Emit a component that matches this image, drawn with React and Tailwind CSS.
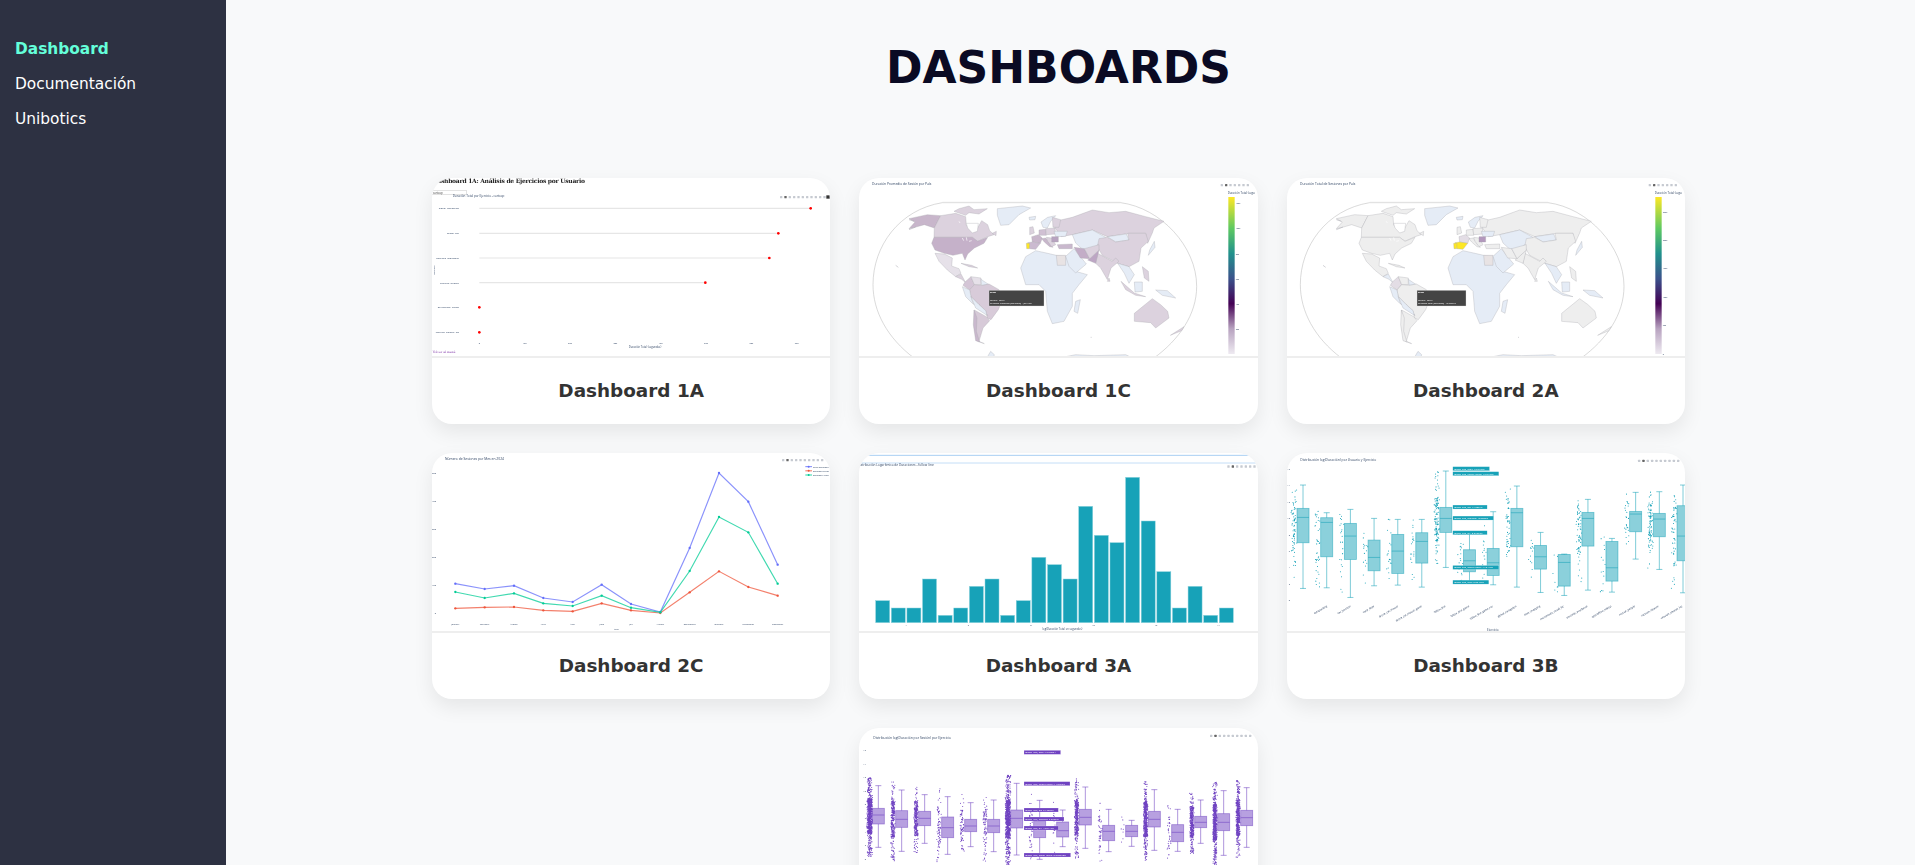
const sans = '"Open Sans", sans-serif'
const ink = '#2a3f5f'

const B = '#e5ecf6'
const L = '#dcd2de'
const G = '#eeeeee'
const Y = '#fde725'

// [points, fill on 1C, fill on 2A]
const countries = [
  ['150,152 168,132 150,122 205,110 245,113 226,150 196,140 168,148', '#c8b6cb', G],
  ['245,113 226,150 225,178 340,178 356,190 386,176 405,170 392,158 386,140 368,128 350,160 322,142 320,116 290,106', L, G],
  ['285,100 300,92 330,84 345,95 385,92 360,108 330,104 320,112', L, G],
  ['400,166 412,160 411,173', L, G],
  ['225,178 340,178 356,190 386,178 375,196 346,210 326,228 318,246 310,226 282,232 256,226 228,216 218,196', '#c5b1c9', G],
  ['228,226 256,228 280,240 278,264 300,272 306,286 290,296 265,276 240,250', '#e6e1e9', G],
  ['290,296 306,288 320,314 308,304', L, B],
  ['306,256 338,262 356,270 330,266', L, G],
  ['415,92 490,84 515,90 480,110 450,140 425,142 415,112', B, B],
  ['318,312 336,296 346,320 332,336 312,322', '#d4c5d6', '#e3dde5'],
  ['336,296 366,300 366,320 346,320', '#e6e1e9', G],
  ['366,304 390,320 368,322', B, B],
  ['332,336 346,320 370,322 390,318 420,335 430,365 418,395 396,425 385,420 380,398 360,380 336,356', '#d8cbd9', G],
  ['310,326 332,336 336,356 342,376 386,412 366,392 340,376 320,356', B, B],
  ['336,356 360,380 380,398 384,412 350,390', B, B],
  ['346,396 382,416 392,428 372,450 360,490 376,497 356,490 346,450', '#d7cad8', G],
  ['345,396 354,420 352,460 362,492 350,488 343,440', '#c9b8cd', G],
  ['485,270 500,236 530,218 566,226 592,232 620,235 650,280 685,290 660,320 640,346 640,385 615,430 580,437 565,400 560,340 540,320 500,320', B, B],
  ['592,232 620,232 620,262 595,262', '#e8e3e4', '#e8e3e4'],
  ['620,235 645,212 682,258 650,285 630,265', B, B],
  ['650,370 664,365 656,406 645,400', B, B],
  ['605,126 640,118 700,96 750,104 800,100 860,116 915,130 885,150 880,165 866,196 860,166 810,166 745,176 700,156 640,170 606,176 586,146', L, G],
  ['640,170 700,156 740,178 705,210 690,232 650,195', B, B],
  ['745,176 802,168 810,186 770,192', B, B],
  ['720,182 745,178 770,192 810,186 806,166 860,166 868,190 846,210 840,250 810,266 776,256 730,232 715,206', L, G],
  ['716,226 760,250 770,240 780,250 756,270 745,305 725,270 710,256', L, G],
  ['645,208 676,212 692,242 664,240', '#c3adc7', G],
  ['692,242 720,216 710,256 686,246', '#bda6c4', G],
  ['676,212 720,200 720,216 692,242', L, G],
  ['595,200 640,198 640,212 600,212', '#c9b8cd', G],
  ['776,256 810,266 826,290 810,316 796,286', B, B],
  ['786,310 826,345 860,356 830,352 800,335', L, B],
  ['826,312 850,312 850,340 828,342', B, B],
  ['850,266 868,280 870,310 856,300', L, G],
  ['890,336 925,338 950,360 910,352', B, B],
  ['872,216 886,190 888,208 868,232', B, B],
  ['826,406 880,362 905,380 926,400 930,420 890,450 875,434 826,430', L, G],
  ['934,472 975,446 968,458', L, G],
  ['745,310 750,300 753,310', L, G],
  ['385,537 395,520 406,530 404,537', B, B],
  ['615,537 650,530 705,533 800,530 815,537', B, B],
  // Europe
  ['510,118 530,115 528,125 512,126', B, B],
  ['546,132 566,118 590,113 575,130 565,150 552,148', B, B],
  ['580,118 605,125 600,148 582,148', L, G],
  ['512,148 522,146 526,165 512,170', L, G],
  ['518,176 538,170 550,180 544,196 520,192', '#c8b6cb', '#e3dde5'],
  ['540,156 560,154 562,172 540,172', '#d0c0d3', G],
  ['548,182 560,180 582,208 572,206 556,192', '#c8b6cb', G],
  ['560,152 588,150 590,168 562,170', L, G],
  ['585,160 625,160 620,175 590,176', B, B],
  ['562,178 578,180 590,200 578,206 566,190', L, G],
  ['578,176 598,176 598,192 578,192', '#b8a3c0', '#b398bd'],
  ['506,194 520,192 544,196 530,214 512,212', '#cbbad0', Y],
  ['502,196 512,196 511,212 503,212', Y, Y],
]

function Toolbar({ x, y, count = 8 }) {
  return (
    <g>
      {Array.from({ length: count }).map((_, i) => (
        <rect key={i} x={x + i * 13} y={y - 3} width="7" height="7" rx="1.5" fill={i === 1 ? '#666666' : '#c6cad1'} />
      ))}
    </g>
  )
}

function Label({ x, y, size = 9, anchor = 'start', fill = ink, children, ...rest }) {
  return (
    <text x={x} y={y} fontSize={size} textAnchor={anchor} fill={fill} fontFamily={sans} {...rest}>
      {children}
    </text>
  )
}

function Chart({ viewBox, children }) {
  return (
    <svg viewBox={viewBox} className="block h-[179px] w-full blur-[0.35px]" preserveAspectRatio="xMinYMin slice">
      {children}
    </svg>
  )
}

function LollipopChart() {
  const rows = [
    ['global_navigation', 115, 1157],
    ['follow_line', 190, 1060],
    ['obstacle_avoidance', 264, 1033],
    ['vacuum_cleaner', 338, 841],
    ['opticalflow_teleop', 412, 163],
    ['vacuum_cleaner_loc', 487, 163],
  ]
  const ticks = ['0', '10k', '20k', '30k', '40k', '50k', '60k', '70k']

  return (
    <Chart viewBox="21 24 1200 537">
      <text x="37" y="40" fontSize="18" fontWeight="700" fill="#222" fontFamily='"DejaVu Serif", serif' textLength="443">
        ashboard 1A: Análisis de Ejercicios por Usuario
      </text>
      <rect x="14" y="62" width="110" height="11" fill="#fff" stroke="#aaa" />
      <Label x={24} y={71} size={8} fill="#333">cartoop</Label>
      <Label x={83} y={81} size={9}>Duración Total por Ejercicio - cartoop</Label>
      <Toolbar x={1065} y={81} count={11} />
      <rect x="1204" y="76" width="10" height="10" fill="#333" />
      {rows.map(([name, y, end]) => (
        <g key={name}>
          <Label x={102} y={y + 3} size={7.5} anchor="end">{name}</Label>
          <line x1="163" x2={end} y1={y} y2={y} stroke="#e6e6e6" strokeWidth="3.5" />
          <circle cx={end} cy={y} r="4" fill="#f00" />
        </g>
      ))}
      {ticks.map((t, i) => (
        <Label key={t} x={163 + i * 136} y={521} size={7} anchor="middle">{t}</Label>
      ))}
      <Label x={660} y={535} size={8} anchor="middle">Duración Total (segundos)</Label>
      <Label x={30} y={300} size={7} anchor="middle" transform="rotate(-90 30 300)">Ejercicio</Label>
      <text x="23" y="549" fontSize="9" fill="#7b2fa5" textDecoration="underline" fontFamily='"DejaVu Serif", serif'>Volver al menú</text>
    </Chart>
  )
}

function WorldMap({ title, variant }) {
  const is1C = variant === '1C'
  const barX = is1C ? 1108 : 1105
  const ticks = is1C
    ? [['120k', 76], ['100k', 152], ['80k', 228], ['60k', 303], ['40k', 379], ['20k', 454]]
    : [['250k', 102], ['200k', 187], ['150k', 272], ['100k', 358], ['50k', 443], ['0', 528]]
  const gradient = `viridis${variant}`

  return (
    <Chart viewBox="0 0 1197 537">
      <defs>
        <linearGradient id={gradient} x1="0" x2="0" y1="0" y2="1">
          <stop offset="0" stopColor="#fde725" />
          <stop offset="0.2" stopColor="#5ec962" />
          <stop offset="0.36" stopColor="#21918c" />
          <stop offset="0.52" stopColor="#3b528b" />
          <stop offset="0.68" stopColor="#440154" />
          <stop offset="0.84" stopColor="#b8a3c0" />
          <stop offset="1" stopColor="#eeeaf1" />
        </linearGradient>
      </defs>
      <Label x={39} y={22} size={10}>{title}</Label>
      <Toolbar x={1085} y={21} count={7} />
      <g transform={is1C ? undefined : 'translate(-2 0)'}>
        <path
          d="M165 540 C85 480 42 400 42 320 C42 205 120 95 250 74 L785 74 C905 90 1013 205 1013 325 C1013 410 960 485 885 540"
          fill="#fff"
          stroke="#b5b5b5"
          strokeWidth="1.5"
        />
        <path d="M250 73 L785 73" stroke="#e2e2e2" strokeWidth="3" />
        {countries.map(([points, one, two], i) => (
          <polygon key={i} points={points} fill={is1C ? one : two} stroke="#a6a6ae" strokeWidth="1" strokeLinejoin="round" />
        ))}
        <polygon points="322,136 358,136 355,160 340,165 326,150" fill="#fff" stroke="#a6a6ae" />
        <path d="M310 180 l4 8 M322 178 l2 10 M300 130 l3 5 M330 190 l8 -2" stroke="#fff" strokeWidth="2" fill="none" />
        <path d="M695 478 h3 M110 262 l8 6 M150 125 l15 5 M150 155 l20 -8" stroke="#a6a6ae" strokeWidth="1.5" fill="none" />
      </g>
      <rect x="390" y="337" width={is1C ? 165 : 147} height="47" fill="#444" stroke="#ddd" />
      <Label x={393} y={346} size={6.5} fill="#fff" fontWeight="700">Brazil</Label>
      <Label x={393} y={368} size={6.5} fill="#fff">country=Brazil</Label>
      <Label x={393} y={379} size={6.5} fill="#fff">{is1C ? 'Duración Promedio (segundos)=4,021.534' : 'Duración Total (segundos)=19.27984k'}</Label>
      <Label x={barX - 2} y={48} size={8.5}>Duración Total (segu</Label>
      <rect x={barX} y="57" width="19" height="471" fill={`url(#${gradient})`} />
      {ticks.map(([t, y]) => (
        <Label key={t} x={barX + 22} y={y + 2} size={6.5}>{t}</Label>
      ))}
    </Chart>
  )
}

function LineChart() {
  const months = ['January', 'February', 'March', 'April', 'May', 'June', 'July', 'August', 'September', 'October', 'November', 'December']
  const xs = [70, 158, 246, 334, 422, 509, 597, 685, 773, 861, 949, 1037]
  const series = [
    ['#636efa', [392, 408, 398, 435, 447, 395, 453, 477, 285, 60, 146, 335], 'Total Sesiones'],
    ['#ef553b', [466, 463, 462, 472, 475, 451, 472, 480, 418, 355, 402, 428], 'Sesiones Term'],
    ['#00cc96', [417, 435, 421, 451, 459, 428, 464, 478, 354, 192, 238, 392], 'Sesiones Aban'],
  ]

  return (
    <Chart viewBox="0 0 1197 537">
      <Label x={39} y={22} size={10}>Número de Sesiones por Mes en 2024</Label>
      <Toolbar x={1050} y={21} count={10} />
      {['500', '400', '300', '200', '100', '0'].map((t, i) => (
        <Label key={t} x={12} y={62 + i * 84} size={7} anchor="end">{t}</Label>
      ))}
      {series.map(([color, ys]) => (
        <g key={color}>
          <polyline points={ys.map((y, i) => `${xs[i]},${y}`).join(' ')} fill="none" stroke={color} strokeWidth="3.5" strokeOpacity="0.75" />
          {ys.map((y, i) => (
            <circle key={i} cx={xs[i]} cy={y} r="3.5" fill={color} />
          ))}
        </g>
      ))}
      {series.map(([color, , name], i) => (
        <g key={name}>
          <line x1="1120" x2="1140" y1={41 + i * 12.5} y2={41 + i * 12.5} stroke={color} strokeWidth="2.5" />
          <circle cx="1130" cy={41 + i * 12.5} r="3" fill={color} />
          <Label x={1143} y={44 + i * 12.5} size={7}>{name}</Label>
        </g>
      ))}
      {months.map((m, i) => (
        <Label key={m} x={xs[i]} y={516} size={7} anchor="middle">{m}</Label>
      ))}
      <Label x={553} y={532} size={7} anchor="middle">Mes</Label>
    </Chart>
  )
}

function Histogram() {
  const tops = [443, 465, 465, 378, 487, 465, 400, 378, 487, 443, 313, 335, 378, 160, 247, 269, 73, 204, 356, 465, 400, 487, 465]

  return (
    <Chart viewBox="0 0 1197 537">
      <line x1="25" x2="1170" y1="7" y2="7" stroke="#a9cff3" strokeWidth="3" />
      <line x1="0" x2="1197" y1="30" y2="30" stroke="#c4def7" strokeWidth="3" />
      <Label x={3} y={40} size={9.5}>istribución Logarítmica de Duraciones - follow_line</Label>
      <Toolbar x={1105} y={40} count={7} />
      {tops.map((top, i) => (
        <rect key={i} x={50 + i * 46.86} y={top} width="42" height={509 - top} fill="#17a2b8" stroke="#8fd3de" strokeWidth="1.5" />
      ))}
      {['4', '6', '8', '10', '12', '14'].map((t, i) => (
        <Label key={t} x={141 + i * 187.5} y={518} size={7} anchor="middle">{t}</Label>
      ))}
      <Label x={610} y={532} size={8} anchor="middle">log(Duración Total en segundos)</Label>
    </Chart>
  )
}

// small fixed-seed generator so the jitter is the same on every render
function seeded(seed) {
  let s = seed
  return () => {
    s = (s * 16807) % 2147483647
    return s / 2147483647
  }
}

function dotsFor([cx, top, q3, , q1, bottom, n], color, offset, spread, seed, low, high) {
  const rand = seeded(seed)
  let d = ''
  for (let i = 0; i < n; i++) {
    const inBox = rand() < 0.65
    const a = inBox ? q3 - 30 : (low ?? top)
    const b = inBox ? q1 + 30 : (high ?? bottom)
    const y = a + rand() * (b - a)
    const x = cx - offset + (rand() + rand() - 1) * spread
    d += `M${x.toFixed(1)} ${y.toFixed(1)}h0`
  }
  return <path d={d} stroke={color} strokeWidth="3.2" strokeLinecap="round" fill="none" />
}

function Box({ box, color }) {
  const [cx, top, q3, med, q1, bottom] = box
  return (
    <g stroke={color} strokeOpacity="0.55" fill="none">
      <line x1={cx} x2={cx} y1={top} y2={q3} strokeWidth="3" />
      <line x1={cx} x2={cx} y1={q1} y2={bottom} strokeWidth="3" />
      <line x1={cx - 9} x2={cx + 9} y1={top} y2={top} strokeWidth="3" />
      <line x1={cx - 9} x2={cx + 9} y1={bottom} y2={bottom} strokeWidth="3" />
      <rect x={cx - 18} y={q3} width="36" height={q1 - q3} fill={color} fillOpacity="0.5" strokeWidth="2.5" />
      <line x1={cx - 18} x2={cx + 18} y1={med} y2={med} strokeWidth="3" />
    </g>
  )
}

function Callout({ x, y, w, color, children }) {
  return (
    <g>
      <rect x={x} y={y - 6} width={w} height="12" fill={color} stroke="#fff" strokeOpacity="0.6" />
      <Label x={x + 3} y={y + 3} size={7.5} fill="#fff">{children}</Label>
    </g>
  )
}

function TealBoxes() {
  const color = '#17a2b8'
  const boxes = [
    [99, 135, 205, 232, 308, 445, 70], [170, 218, 233, 247, 350, 443, 40], [241, 208, 250, 288, 358, 472, 24],
    [312, 235, 300, 352, 392, 437, 16], [383, 238, 283, 333, 400, 435, 18], [455, 238, 278, 304, 369, 441, 22],
    [527, 93, 202, 235, 277, 382, 130], [598, 278, 329, 362, 395, 425, 20], [669, 215, 325, 368, 406, 434, 16],
    [740, 138, 205, 218, 320, 441, 50], [811, 277, 316, 350, 387, 457, 14], [882, 342, 343, 367, 438, 466, 8],
    [953, 178, 217, 235, 318, 450, 70], [1025, 295, 304, 383, 423, 456, 14], [1096, 157, 214, 222, 275, 357, 26],
    [1167, 155, 220, 237, 290, 388, 90], [1238, 135, 197, 288, 362, 458, 55],
  ]
  const names = ['autoparking', 'car_junction', 'color_filter', 'drone_cat_mouse', 'drone_cat_mouse_game', 'follow_line', 'follow_line_game', 'follow_line_game_ros', 'global_navigation', 'laser_mapping', 'montecarlo_visual_loc', 'obstacle_avoidance', 'opticalflow_teleop', 'rescue_people', 'vacuum_cleaner', 'vacuum_cleaner_loc']
  const callouts = [
    [86, 110, 'follow_line, max: 19.31273'],
    [101, 138, 'follow_line, upper fence: 19.31273'],
    [201, 103, 'follow_line, q3: 11.20346'],
    [234, 122, 'follow_line, median: 10.08067'],
    [278, 103, 'follow_line, q1: 8.279529'],
    [382, 138, 'follow_line, lower fence: 4.124195'],
    [426, 108, 'follow_line, min: 2.394775'],
  ]

  return (
    <Chart viewBox="51 39 1194 537">
      <Label x={91} y={63} size={10}>Distribución log(Duración) por Usuario y Ejercicio</Label>
      <Toolbar x={1103} y={62} count={10} />
      {['16', '14', '12', '10', '8', '6', '4', '2', '0'].map((t, i) => (
        <Label key={t} x={60} y={90 + i * 49.2} size={7} anchor="end">{t}</Label>
      ))}
      {boxes.map((box, i) => (
        <g key={box[0]}>
          {dotsFor(box, color, 27, 9, 101 + i * 37)}
          <Box box={box} color={color} />
        </g>
      ))}
      {callouts.map(([y, w, text]) => (
        <Callout key={y} x={548} y={y} w={w} color={color}>{text}</Callout>
      ))}
      {names.map((name, i) => (
        <Label key={name} x={172 + i * 71} y={500} size={8} anchor="end" transform={`rotate(-30 ${172 + i * 71} 500)`}>{name}</Label>
      ))}
      <Label x={668} y={572} size={9} anchor="middle">Ejercicio</Label>
    </Chart>
  )
}

function PurpleBoxes() {
  const color = '#6f42c1'
  const boxes = [
    [85, 212, 280, 300, 327, 397, 900], [155, 225, 287, 313, 337, 409, 320], [224, 239, 289, 310, 332, 385, 300],
    [293, 245, 306, 338, 368, 418, 80], [362, 263, 313, 333, 350, 395, 70], [431, 255, 313, 333, 353, 410, 90],
    [500, 205, 285, 310, 339, 420, 900], [569, 256, 318, 340, 368, 433, 40], [638, 285, 321, 347, 366, 395, 16],
    [706, 216, 283, 307, 330, 400, 420], [776, 283, 331, 349, 377, 410, 50], [845, 316, 331, 349, 365, 394, 8],
    [913, 224, 289, 313, 336, 406, 520], [983, 283, 329, 352, 380, 409, 40], [1052, 255, 304, 322, 338, 385, 420],
    [1121, 227, 296, 322, 347, 421, 700], [1190, 218, 286, 308, 332, 397, 560],
  ]
  const callouts = [
    [112, 110, 'follow_line, max: 15.69054'],
    [206, 138, 'follow_line, upper fence: 11.09593'],
    [285, 103, 'follow_line, q3: 7.175876'],
    [312, 120, 'follow_line, median: 5.905571'],
    [339, 103, 'follow_line, q1: 4.564178'],
    [420, 140, 'follow_line, lower fence: 0.3907708'],
  ]
  const wide = [85, 500]

  return (
    <Chart viewBox="27 39 1197 537">
      <Label x={70} y={72} size={10}>Distribución log(Duración por Sesión) por Ejercicio</Label>
      <Toolbar x={1080} y={62} count={10} />
      {['16', '14', '12', '10', '8', '6', '4', '2', '0'].map((t, i) => (
        <Label key={t} x={48} y={108 + i * 40.8} size={7} anchor="end">{t}</Label>
      ))}
      {boxes.map((box, i) => {
        const isWide = wide.includes(box[0])
        return (
          <g key={box[0]}>
            {dotsFor(box, color, 26, isWide ? 9 : 7, 211 + i * 53, box[1] - 25, box[5] + 30)}
            <Box box={box} color={color} />
          </g>
        )
      })}
      {callouts.map(([y, w, text]) => (
        <Callout key={y} x={522} y={y} w={w} color={color}>{text}</Callout>
      ))}
    </Chart>
  )
}

function DashboardCard({ title, className = '', children }) {
  return (
    <article className={`overflow-hidden rounded-[20px] bg-white shadow-[0_8px_20px_rgba(0,0,0,0.08)] ${className}`}>
      <div className="h-[180px] overflow-hidden border-b-2 border-[#eeeeee]">{children}</div>
      {title && (
        <h2 className="flex h-[66px] items-center justify-center text-[18.4px] font-bold text-[#333333]">{title}</h2>
      )}
    </article>
  )
}

export default function App() {
  return (
    <div className="flex h-screen overflow-hidden bg-[#f8f9fa] font-['DejaVu_Sans',sans-serif]">
      <aside className="w-[226px] shrink-0 bg-[#2d3142] pt-[37px] pl-[15px]">
        <nav className="flex flex-col gap-[10px] text-[15.4px] leading-[25px] text-white">
          <a className="font-bold text-[#64ffda]">Dashboard</a>
          <a>Documentación</a>
          <a>Unibotics</a>
        </nav>
      </aside>

      <main className="flex flex-1 flex-col items-center pr-[24px]">
        <h1 className="mt-[42px] mb-[84px] text-[44px] leading-[52px] font-bold text-[#0a0a23]">DASHBOARDS</h1>

        <section className="grid w-[1253px] grid-cols-3 gap-x-[29px] gap-y-[29px]">
          <DashboardCard title="Dashboard 1A"><LollipopChart /></DashboardCard>
          <DashboardCard title="Dashboard 1C"><WorldMap title="Duración Promedio de Sesión por País" variant="1C" /></DashboardCard>
          <DashboardCard title="Dashboard 2A"><WorldMap title="Duración Total de Sesiones por País" variant="2A" /></DashboardCard>
          <DashboardCard title="Dashboard 2C"><LineChart /></DashboardCard>
          <DashboardCard title="Dashboard 3A"><Histogram /></DashboardCard>
          <DashboardCard title="Dashboard 3B"><TealBoxes /></DashboardCard>
          <DashboardCard className="col-start-2"><PurpleBoxes /></DashboardCard>
        </section>
      </main>
    </div>
  )
}
